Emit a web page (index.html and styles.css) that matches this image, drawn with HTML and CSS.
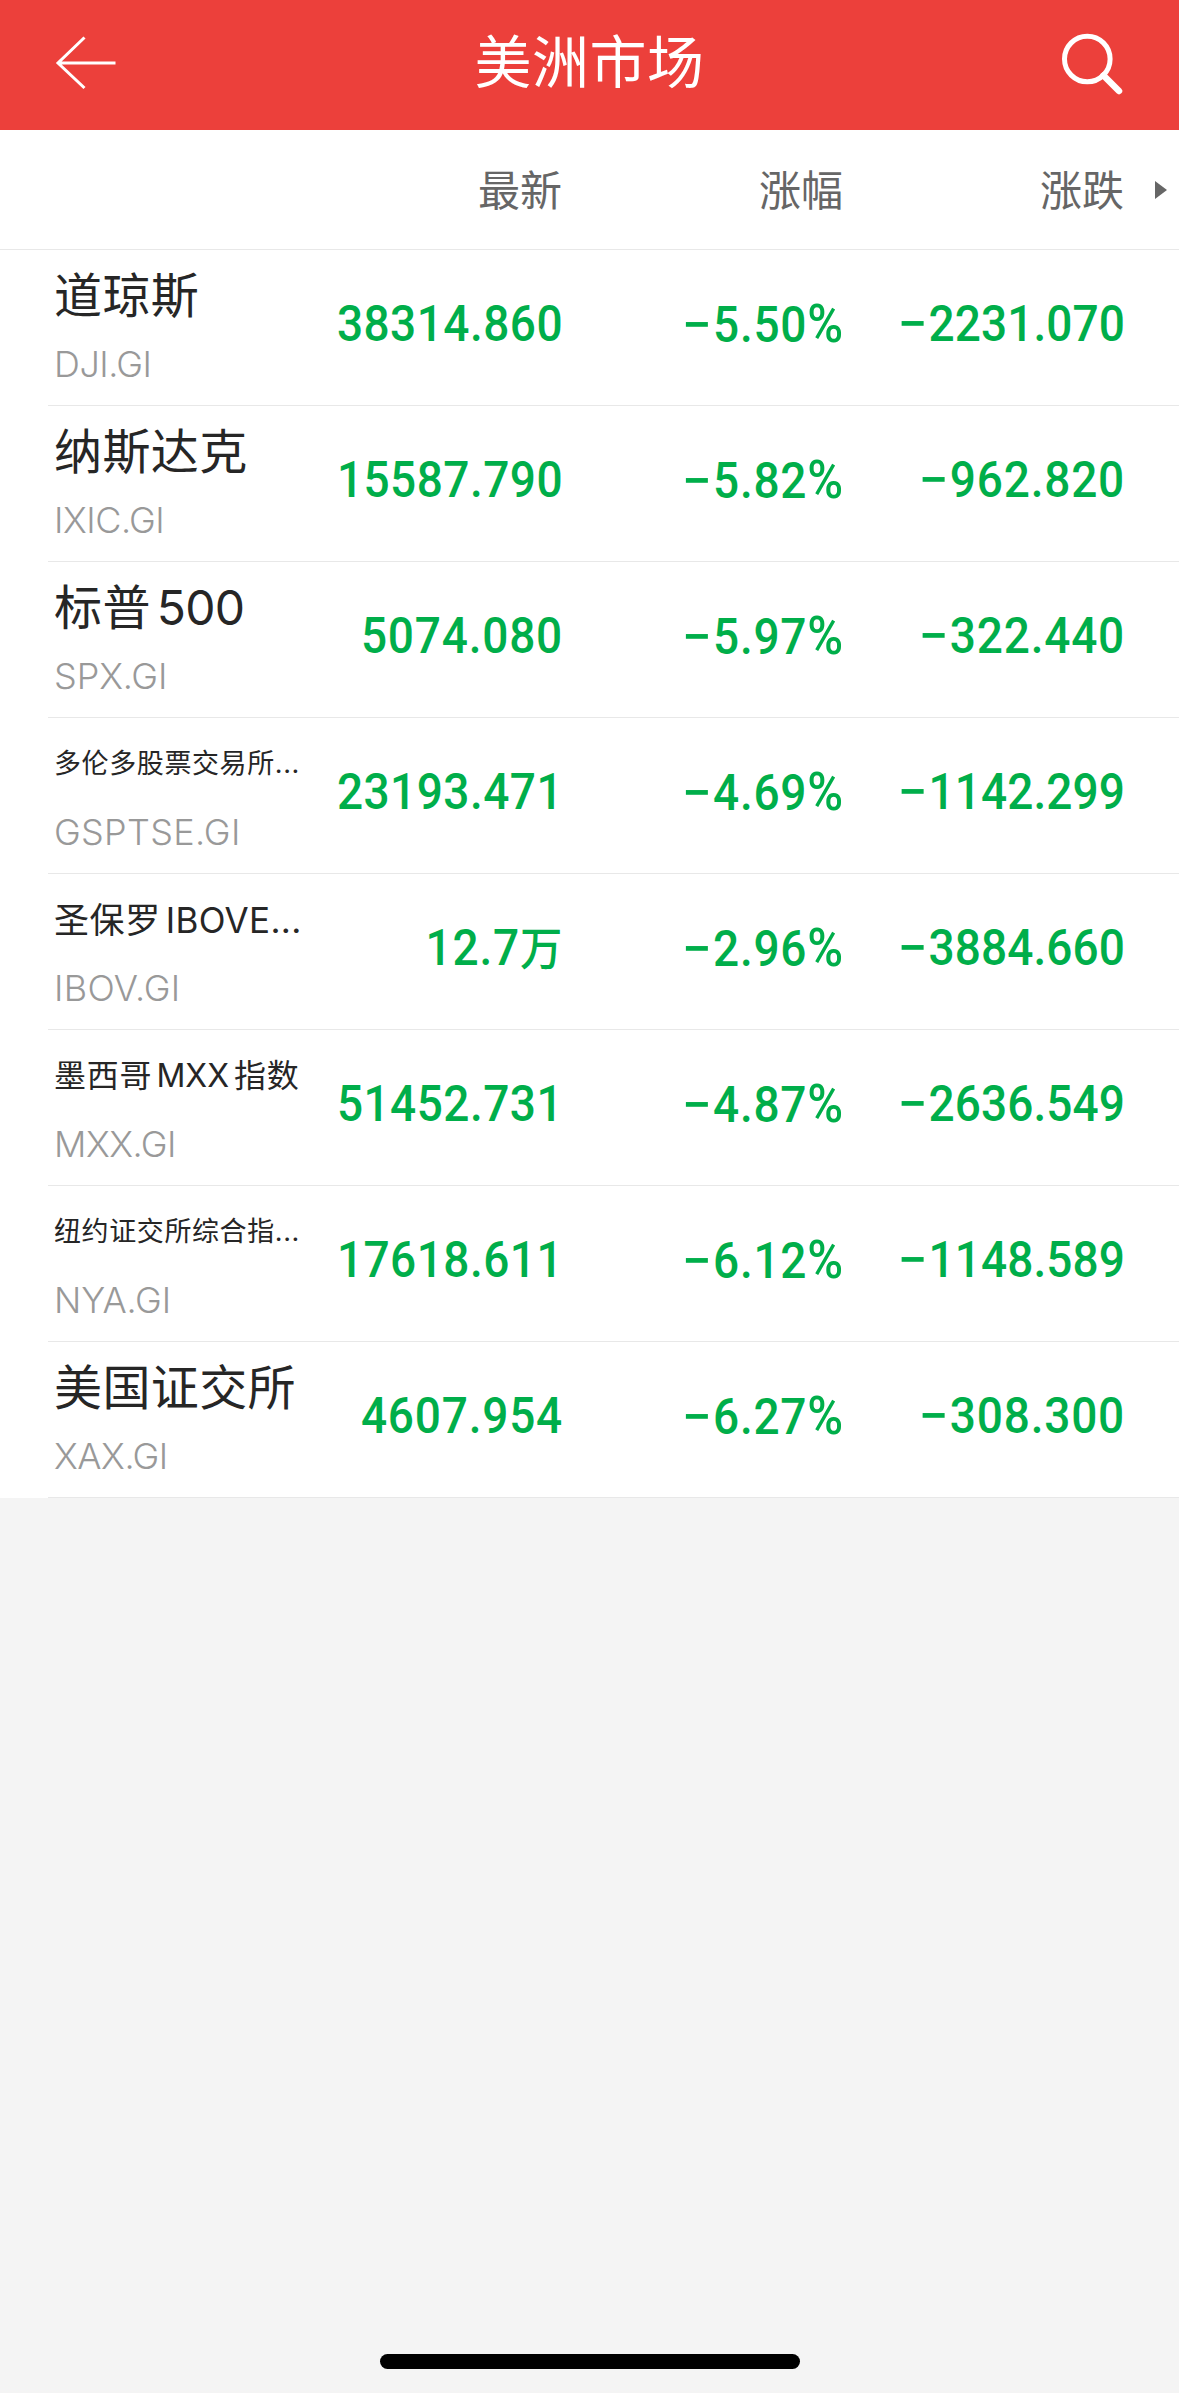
FILE: index.html
```html
<!DOCTYPE html>
<html lang="zh-CN">
<head>
<meta charset="utf-8">
<title>美洲市场</title>
<link rel="stylesheet" href="styles.css">
</head>
<body>
<header class="navbar">
  <svg class="back" viewBox="0 0 64 64" width="64" height="64"><path d="M32.500 6.500 6 32l26.500 25M6 32h57.500"/></svg>
  <h1 class="title">美洲市场</h1>
  <svg class="search" viewBox="0 0 68 68" width="68" height="68"><circle cx="28.300" cy="28" r="22.800"/><path class="handle" d="M44.500 44.500l15.500 15.500"/></svg>
</header>
<main class="market">
  <div class="grid head">
    <span></span><span>最新</span><span>涨幅</span><span>涨跌</span>
    <svg class="more" viewBox="0 0 12 18" width="12" height="18"><path d="M0 0 12 9 0 18z"/></svg>
  </div>
  <section class="grid row"><div class="stock"><div class="name">道琼斯</div><div class="code snug">DJI.GI</div></div><span class="num wide">38314.860</span><span class="num pct"><i>−</i>5.50<b>%</b></span><span class="num long"><i>−</i>2231.070</span></section>
  <section class="grid row"><div class="stock"><div class="name">纳斯达克</div><div class="code snug">IXIC.GI</div></div><span class="num wide">15587.790</span><span class="num pct"><i>−</i>5.82<b>%</b></span><span class="num"><i>−</i>962.820</span></section>
  <section class="grid row"><div class="stock"><div class="name">标普<span class="latin digits">500</span></div><div class="code">SPX.GI</div></div><span class="num">5074.080</span><span class="num pct"><i>−</i>5.97<b>%</b></span><span class="num"><i>−</i>322.440</span></section>
  <section class="grid row"><div class="stock"><div class="name small">多伦多股票交易所<span class="latin">...</span></div><div class="code loose">GSPTSE.GI</div></div><span class="num wide">23193.471</span><span class="num pct"><i>−</i>4.69<b>%</b></span><span class="num long"><i>−</i>1142.299</span></section>
  <section class="grid row"><div class="stock"><div class="name large">圣保罗<span class="latin ibov">IBOVE...</span></div><div class="code loose">IBOV.GI</div></div><span class="num">12.7<span class="unit">万</span></span><span class="num pct"><i>−</i>2.96<b>%</b></span><span class="num long"><i>−</i>3884.660</span></section>
  <section class="grid row"><div class="stock"><div class="name medium">墨西哥<span class="latin mxx">MXX</span>指数</div><div class="code snug">MXX.GI</div></div><span class="num wide">51452.731</span><span class="num pct"><i>−</i>4.87<b>%</b></span><span class="num long"><i>−</i>2636.549</span></section>
  <section class="grid row"><div class="stock"><div class="name small">纽约证交所综合指<span class="latin">...</span></div><div class="code">NYA.GI</div></div><span class="num wide">17618.611</span><span class="num pct"><i>−</i>6.12<b>%</b></span><span class="num long"><i>−</i>1148.589</span></section>
  <section class="grid row"><div class="stock"><div class="name">美国证交所</div><div class="code snug">XAX.GI</div></div><span class="num">4607.954</span><span class="num pct"><i>−</i>6.27<b>%</b></span><span class="num"><i>−</i>308.300</span></section>
</main>
<footer class="home"><div class="indicator"></div></footer>
</body>
</html>
```
FILE: styles.css
```css
* { box-sizing: border-box; }
body {
  margin: 0;
  width: 1179px;
  height: 2393px;
  display: flex;
  flex-direction: column;
  background: #f4f4f4;
  font-family: Inter, "Noto Sans CJK SC", sans-serif;
  color: #262626;
}
.navbar {
  height: 130px;
  flex: none;
  display: grid;
  grid-template-columns: 68px 1fr 68px;
  padding: 0 52px;
  align-items: center;
  background: #ec403b;
}
.back { margin-top: -5px; fill: none; stroke: #fff; stroke-width: 3; }
.search { margin-top: -1px; fill: none; stroke: #fff; stroke-width: 5; }
.handle { stroke-width: 6.5; stroke-linecap: round; }
.title { margin: 0; text-align: center; color: #fff; font-size: 57px; font-weight: 400; line-height: 126px; letter-spacing: .5px; padding-bottom: 4px; }
.market { background: #fff; }
.grid { display: grid; grid-template-columns: 251px 257px 281px 281px 1fr; align-items: center; }
.head {
  height: 120px;
  padding: 2px 0 0 54px;
  border-bottom: 1px solid #e8e8e8;
  color: #666;
  font-size: 42px;
  line-height: 60px;
  text-align: right;
}
.more { margin: -1px 0 0 31px; fill: #666; }
.row { height: 156px; margin-left: 48px; padding-left: 6px; border-bottom: 1px solid #e8e8e8; }
.stock { display: flex; flex-direction: column; height: 155px; padding-top: 12px; }
.name { height: 68px; line-height: 68px; font-size: 48px; letter-spacing: .4px; white-space: nowrap; }
.small { font-size: 27px; letter-spacing: .6px; }
.medium { font-size: 32px; letter-spacing: .8px; }
.large { font-size: 35px; letter-spacing: .6px; }
.latin { font-family: Inter, sans-serif; }
.digits { margin-left: 6px; letter-spacing: -.8px; }
.ibov { margin-left: 5px; letter-spacing: .3px; }
.mxx { margin: 0 5px 0 4px; letter-spacing: 0; }
.code { height: 60px; line-height: 68px; font-size: 36px; font-weight: 300; color: #999; letter-spacing: -.1px; }
.snug { letter-spacing: -.5px; }
.loose { letter-spacing: .3px; }
.num {
  padding-bottom: 7px;
  font-family: Roboto, sans-serif;
  font-weight: 500;
  font-size: 50px;
  line-height: 60px;
  letter-spacing: .85px;
  text-align: right;
  white-space: nowrap;
  color: #00ae4a;
  transform: translateX(1px) scaleX(.92);
  transform-origin: right;
}
.num i { display: inline-block; font-style: normal; margin-right: 1px; transform: scaleX(1.15); transform-origin: right; }
.pct { padding-bottom: 6px; }
.pct b { font-weight: 500; font-size: 53px; line-height: 1; }
.wide { letter-spacing: .5px; }
.long { letter-spacing: .1px; }
.unit { font-family: "Noto Sans CJK SC", sans-serif; font-size: 46px; line-height: 1; }
.home { flex: 1; display: flex; align-items: flex-end; justify-content: center; padding: 0 0 24px 1px; }
.indicator { width: 420px; height: 15px; border-radius: 8px; background: #000; }
```
